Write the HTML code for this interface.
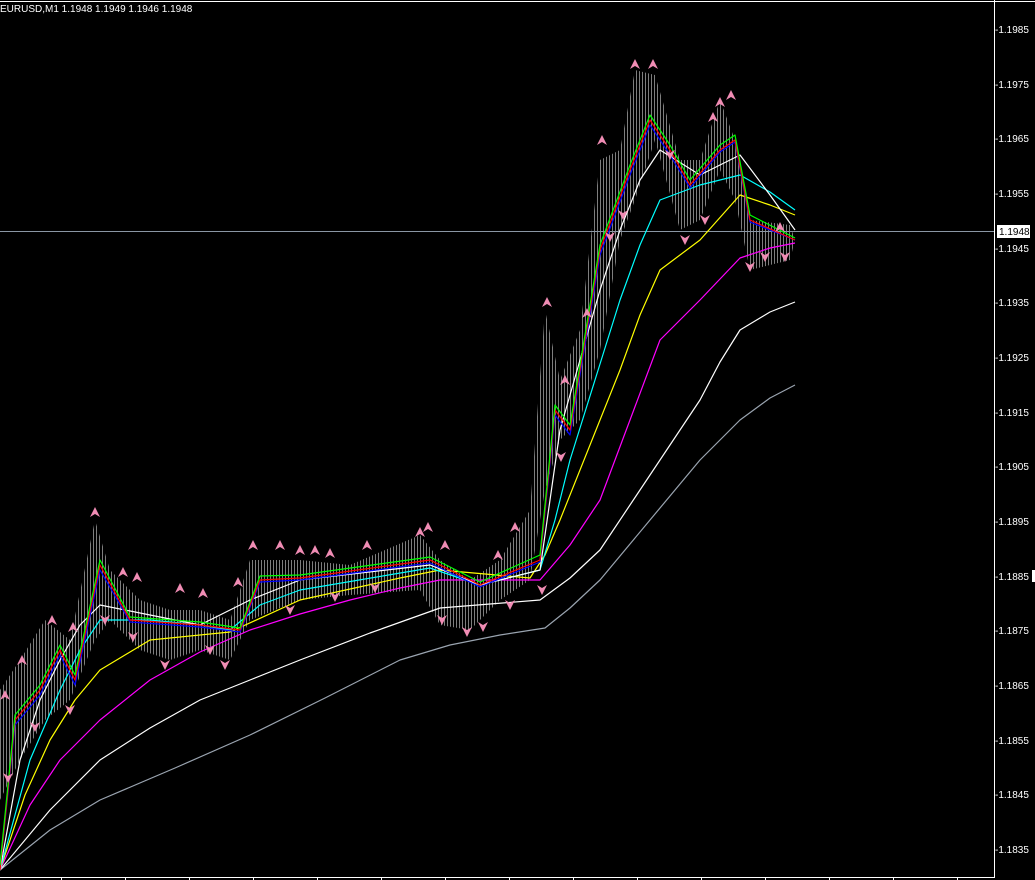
<!DOCTYPE html><html><head><style>html,body{margin:0;padding:0;background:#000;overflow:hidden}svg{display:block}text{font-family:"Liberation Sans",sans-serif;font-size:10px;fill:#fff}</style></head><body>
<svg width="1035" height="880" viewBox="0 0 1035 880">
<defs>
<pattern id="bars" width="3" height="4" patternUnits="userSpaceOnUse"><rect x="0" y="0" width="1" height="4" fill="#7e7e7e"/></pattern>
<symbol id="up" viewBox="0 0 10 10"><path d="M5 0 L10 10 L5 7 L0 10Z" fill="#f08cb4"/></symbol>
<symbol id="dn" viewBox="0 0 10 10"><path d="M5 10 L10 0 L5 3 L0 0Z" fill="#f08cb4"/></symbol>
</defs>
<rect width="1035" height="880" fill="#000"/>
<line x1="0" y1="1.5" x2="1035" y2="1.5" stroke="#fff"/>
<text x="0" y="12">EURUSD,M1  1.1948 1.1949 1.1946 1.1948</text>
<polygon fill="url(#bars)" points="0,690 20,660 45,620 70,640 95,520 110,570 140,600 170,610 200,610 230,620 250,560 300,560 350,565 420,535 440,560 470,580 500,560 530,510 545,310 560,380 580,330 600,160 620,150 635,70 655,75 680,160 700,160 720,100 735,140 750,220 790,225 795,240 790,260 750,270 735,200 720,170 700,220 680,230 655,140 635,200 620,240 600,350 580,420 560,440 545,490 530,580 500,600 470,630 440,625 420,590 350,595 300,600 250,620 230,660 200,650 170,660 140,650 110,620 95,640 70,700 45,720 20,760 0,800"/>
<line x1="0" y1="231.5" x2="994" y2="231.5" stroke="#8a96a4"/>
<g fill="none" stroke-width="1.2" stroke-linejoin="round">
<polyline stroke="#9aa4b0" points="0,870 50,830 100,800 175,768 250,735 325,698 400,660 450,645 500,635 545,628 570,608 600,580 650,520 700,460 740,420 770,398 795,385"/>
<polyline stroke="#fff" points="0,870 50,810 100,760 150,728 200,700 250,680 300,660 370,633 440,608 490,604 540,600 570,578 600,550 650,475 700,400 720,362 740,330 770,312 795,302"/>
<polyline stroke="#ff00ff" points="0,870 30,805 60,760 100,720 150,680 200,652 250,630 300,614 350,600 400,588 440,580 490,580 540,580 570,545 600,500 630,420 660,340 700,300 740,258 770,248 795,243"/>
<polyline stroke="#ffff00" points="0,870 25,795 50,740 75,700 100,670 150,640 230,632 300,600 400,578 440,570 530,578 545,555 560,520 590,445 620,370 640,315 660,270 700,240 740,195 770,205 795,215"/>
<polyline stroke="#00ffff" points="0,870 30,760 60,690 80,650 100,620 150,620 200,625 230,630 260,605 300,590 430,568 480,585 540,570 555,520 570,460 595,380 620,300 640,245 660,200 700,185 740,175 770,192 795,210"/>
<polyline stroke="#fff" points="0,870 20,760 40,700 60,660 80,625 100,605 150,615 200,625 250,600 300,580 430,565 480,585 540,570 560,430 580,360 600,290 620,230 640,180 660,150 700,175 740,155 770,195 795,230"/>
<polyline stroke="#0000ff" points="0,870 15,725 40,695 60,655 75,685 100,570 130,622 200,627 240,632 260,582 300,580 430,563 480,587 540,562 555,415 570,435 600,255 630,175 650,125 670,155 690,188 720,152 735,142 750,222 795,240"/>
<polyline stroke="#ff0000" points="0,870 15,720 40,690 60,650 75,680 100,565 130,620 200,625 240,630 260,580 300,578 430,560 480,585 540,560 555,410 570,430 600,250 630,170 650,120 670,150 690,185 720,150 735,140 750,220 795,240"/>
<polyline stroke="#00ff00" points="0,865 15,715 40,685 60,645 75,675 100,560 130,617 200,622 240,628 260,576 300,575 430,557 480,582 540,555 555,405 570,425 600,245 630,165 650,115 670,145 690,180 720,145 735,135 750,215 795,238"/>
</g>
<g>
<use href="#up" x="0" y="690" width="10" height="10"/><use href="#up" x="17" y="655" width="10" height="10"/><use href="#up" x="47" y="615" width="10" height="10"/><use href="#up" x="68" y="622" width="10" height="10"/><use href="#up" x="90" y="507" width="10" height="10"/><use href="#up" x="118" y="567" width="10" height="10"/><use href="#up" x="132" y="572" width="10" height="10"/><use href="#up" x="175" y="583" width="10" height="10"/><use href="#up" x="198" y="588" width="10" height="10"/><use href="#up" x="233" y="577" width="10" height="10"/><use href="#up" x="248" y="540" width="10" height="10"/><use href="#up" x="275" y="540" width="10" height="10"/><use href="#up" x="295" y="545" width="10" height="10"/><use href="#up" x="310" y="545" width="10" height="10"/><use href="#up" x="325" y="548" width="10" height="10"/><use href="#up" x="362" y="540" width="10" height="10"/><use href="#up" x="415" y="527" width="10" height="10"/><use href="#up" x="423" y="522" width="10" height="10"/><use href="#up" x="440" y="540" width="10" height="10"/><use href="#up" x="493" y="550" width="10" height="10"/><use href="#up" x="510" y="522" width="10" height="10"/><use href="#up" x="542" y="297" width="10" height="10"/><use href="#up" x="560" y="375" width="10" height="10"/><use href="#up" x="582" y="308" width="10" height="10"/><use href="#up" x="597" y="135" width="10" height="10"/><use href="#up" x="630" y="59" width="10" height="10"/><use href="#up" x="648" y="59" width="10" height="10"/><use href="#up" x="708" y="112" width="10" height="10"/><use href="#up" x="715" y="97" width="10" height="10"/><use href="#up" x="726" y="90" width="10" height="10"/><use href="#up" x="775" y="222" width="10" height="10"/>
<use href="#dn" x="3" y="773" width="10" height="10"/><use href="#dn" x="30" y="722" width="10" height="10"/><use href="#dn" x="65" y="705" width="10" height="10"/><use href="#dn" x="100" y="615" width="10" height="10"/><use href="#dn" x="128" y="632" width="10" height="10"/><use href="#dn" x="160" y="660" width="10" height="10"/><use href="#dn" x="205" y="645" width="10" height="10"/><use href="#dn" x="220" y="660" width="10" height="10"/><use href="#dn" x="285" y="605" width="10" height="10"/><use href="#dn" x="330" y="592" width="10" height="10"/><use href="#dn" x="370" y="583" width="10" height="10"/><use href="#dn" x="437" y="615" width="10" height="10"/><use href="#dn" x="462" y="627" width="10" height="10"/><use href="#dn" x="478" y="622" width="10" height="10"/><use href="#dn" x="505" y="600" width="10" height="10"/><use href="#dn" x="537" y="585" width="10" height="10"/><use href="#dn" x="556" y="452" width="10" height="10"/><use href="#dn" x="605" y="232" width="10" height="10"/><use href="#dn" x="618" y="210" width="10" height="10"/><use href="#dn" x="665" y="150" width="10" height="10"/><use href="#dn" x="680" y="235" width="10" height="10"/><use href="#dn" x="700" y="215" width="10" height="10"/><use href="#dn" x="745" y="262" width="10" height="10"/><use href="#dn" x="760" y="252" width="10" height="10"/><use href="#dn" x="780" y="252" width="10" height="10"/>
</g>
<line x1="994.5" y1="0" x2="994.5" y2="878" stroke="#fff"/>
<line x1="0" y1="877.5" x2="995" y2="877.5" stroke="#fff"/>
<g stroke="#fff">
<line x1="61.5" y1="877" x2="61.5" y2="880"/><line x1="125.5" y1="877" x2="125.5" y2="880"/><line x1="189.5" y1="877" x2="189.5" y2="880"/><line x1="253.5" y1="877" x2="253.5" y2="880"/><line x1="317.5" y1="877" x2="317.5" y2="880"/><line x1="381.5" y1="877" x2="381.5" y2="880"/><line x1="445.5" y1="877" x2="445.5" y2="880"/><line x1="509.5" y1="877" x2="509.5" y2="880"/><line x1="573.5" y1="877" x2="573.5" y2="880"/><line x1="637.5" y1="877" x2="637.5" y2="880"/><line x1="701.5" y1="877" x2="701.5" y2="880"/><line x1="765.5" y1="877" x2="765.5" y2="880"/><line x1="829.5" y1="877" x2="829.5" y2="880"/><line x1="893.5" y1="877" x2="893.5" y2="880"/><line x1="957.5" y1="877" x2="957.5" y2="880"/>
</g>
<g>
<text x="995" y="33">-1.1985</text><text x="995" y="88">-1.1975</text><text x="995" y="142">-1.1965</text><text x="995" y="197">-1.1955</text><text x="995" y="252">-1.1945</text><text x="995" y="306">-1.1935</text><text x="995" y="361">-1.1925</text><text x="995" y="416">-1.1915</text><text x="995" y="470">-1.1905</text><text x="995" y="525">-1.1895</text><text x="995" y="580">-1.1885</text><text x="995" y="634">-1.1875</text><text x="995" y="689">-1.1865</text><text x="995" y="744">-1.1855</text><text x="995" y="798">-1.1845</text><text x="995" y="853">-1.1835</text>
</g>
<rect x="997" y="225" width="33" height="13" fill="#fff"/>
<text x="999" y="235" style="fill:#000">1.1948</text>
<rect x="1032" y="570" width="3" height="12" fill="#fff"/>
</svg>
</body></html>
